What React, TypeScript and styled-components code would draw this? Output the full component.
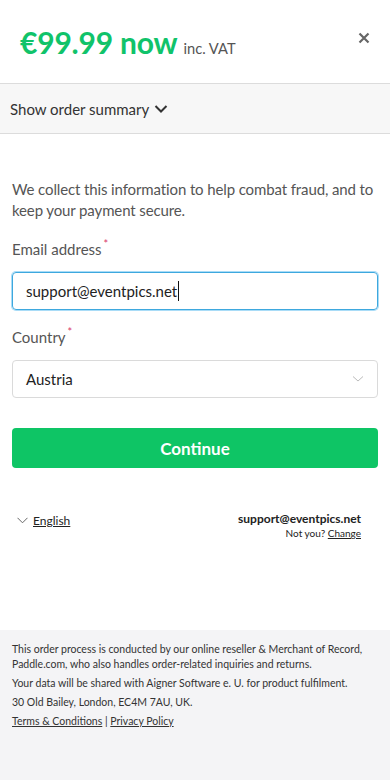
import React from "react";
import styled, { createGlobalStyle } from "styled-components";

const Global = createGlobalStyle`
  html, body { margin: 0; padding: 0; background: #fff; }
  body { font-family: Lato, "Open Sans", sans-serif; -webkit-font-smoothing: antialiased; }
  * { box-sizing: border-box; }
`;

const Page = styled.div`
  min-height: 780px;
  display: flex;
  flex-direction: column;
`;

const Header = styled.header`
  height: 84px;
  border-bottom: 1px solid #dcdcdc;
  display: flex;
  align-items: flex-start;
  justify-content: space-between;
  padding: 24px 20px 0 20px;
`;

const Price = styled.div`
  display: flex;
  align-items: baseline;
  gap: 6px;
`;

const Amount = styled.span`
  font-size: 30px;
  font-weight: 700;
  color: #10c36a;
  letter-spacing: -0.2px;
`;

const Vat = styled.span`
  font-size: 14.7px;
  color: #555;
`;

const Close = styled.button`
  border: 0;
  background: none;
  padding: 0;
  margin-top: 8px;
  width: 12px;
  height: 12px;
  display: flex;
  cursor: pointer;
`;

const Summary = styled.div`
  height: 50px;
  background: #f7f7f7;
  border-bottom: 1px solid #dcdcdc;
  display: flex;
  align-items: center;
  gap: 5px;
  padding: 0 10px;
  font-size: 15px;
  color: #333;
`;

const Form = styled.section`
  padding: 45px 12px 0 12px;
  display: flex;
  flex-direction: column;
`;

const Intro = styled.p`
  margin: 0 0 18px 0;
  font-size: 15px;
  letter-spacing: -0.12px;
  line-height: 21px;
  color: #555;
`;

const Label = styled.label`
  font-size: 15px;
  color: #555;
  line-height: 20px;
  display: block;
  margin-bottom: 13px;
`;

const Star = styled.sup`
  color: #d9366b;
  font-size: 11px;
  line-height: 0;
  margin-left: 2px;
  position: relative;
  top: -1px;
`;

const Field = styled.div<{ $focused?: boolean }>`
  height: 38px;
  border-radius: 4px;
  border: 1px solid ${(p) => (p.$focused ? "#3ea8de" : "#dadada")};
  box-shadow: ${(p) => (p.$focused ? "0 0 0 1px #a9dcf7" : "none")};
  display: flex;
  align-items: center;
  justify-content: space-between;
  padding: 0 13px;
  font-size: 15px;
  color: #222;
  margin-bottom: 17px;
`;

const Caret = styled.span`
  display: inline-block;
  width: 1px;
  height: 20px;
  background: #111;
  margin-left: 1px;
`;

const Value = styled.span`
  display: flex;
  align-items: center;
`;

const Button = styled.button`
  margin-top: 13px;
  height: 40px;
  border: 0;
  border-radius: 4px;
  background: #0ec565;
  color: #fff;
  font-family: Lato, sans-serif;
  font-size: 17px;
  font-weight: 700;
  cursor: pointer;
`;

const Meta = styled.div`
  display: flex;
  justify-content: space-between;
  padding: 43px 29px 0 17px;
`;

const Lang = styled.div`
  display: flex;
  align-items: center;
  gap: 5px;
  font-size: 12px;
  color: #222;
  height: 18px;
`;

const Link = styled.a`
  color: inherit;
  text-decoration: underline;
`;

const Account = styled.div`
  display: flex;
  flex-direction: column;
  align-items: flex-end;
`;

const AccEmail = styled.span`
  font-size: 12px;
  font-weight: 700;
  color: #222;
  line-height: 16px;
`;

const NotYou = styled.span`
  font-size: 10px;
  color: #222;
  line-height: 13px;
`;

const Legal = styled.footer`
  margin-top: auto;
  background: #f4f4f6;
  height: 150px;
  padding: 12px 12px 0 12px;
  font-size: 10.5px;
  color: #333;
`;

const LegalP = styled.p`
  margin: 0 0 4px 0;
  line-height: 15px;
`;

export default function App() {
  return (
    <Page>
      <Global />
      <Header>
        <Price>
          <Amount>€99.99 now</Amount>
          <Vat>inc. VAT</Vat>
        </Price>
        <Close aria-label="Close">
          <svg width="12" height="12" viewBox="0 0 12 12">
            <path d="M1.5 1.5 L10.5 10.5 M10.5 1.5 L1.5 10.5" stroke="#666" strokeWidth="2.2" strokeLinecap="butt" />
          </svg>
        </Close>
      </Header>
      <Summary>
        Show order summary
        <svg width="14" height="10" viewBox="0 0 14 10">
          <path d="M1.5 2 L7 7.5 L12.5 2" stroke="#333" strokeWidth="2" fill="none" />
        </svg>
      </Summary>
      <Form>
        <Intro>We collect this information to help combat fraud, and to keep your payment secure.</Intro>
        <Label>
          Email address<Star>*</Star>
        </Label>
        <Field $focused>
          <Value>
            support@eventpics.net<Caret />
          </Value>
        </Field>
        <Label>
          Country<Star>*</Star>
        </Label>
        <Field>
          <Value>Austria</Value>
          <svg width="12" height="8" viewBox="0 0 12 8">
            <path d="M1 1.5 L6 6 L11 1.5" stroke="#bbb" strokeWidth="1" fill="none" />
          </svg>
        </Field>
        <Button>Continue</Button>
      </Form>
      <Meta>
        <Lang>
          <svg width="11" height="7" viewBox="0 0 11 7">
            <path d="M0.5 0.8 L5.5 5.8 L10.5 0.8" stroke="#666" strokeWidth="1" fill="none" />
          </svg>
          <Link>English</Link>
        </Lang>
        <Account>
          <AccEmail>support@eventpics.net</AccEmail>
          <NotYou>
            Not you? <Link>Change</Link>
          </NotYou>
        </Account>
      </Meta>
      <Legal>
        <LegalP>
          This order process is conducted by our online reseller &amp; Merchant of Record, Paddle.com, who also handles order-related inquiries and returns.
        </LegalP>
        <LegalP>Your data will be shared with Aigner Software e. U. for product fulfilment.</LegalP>
        <LegalP>30 Old Bailey, London, EC4M 7AU, UK.</LegalP>
        <LegalP>
          <Link>Terms &amp; Conditions</Link> | <Link>Privacy Policy</Link>
        </LegalP>
      </Legal>
    </Page>
  );
}
